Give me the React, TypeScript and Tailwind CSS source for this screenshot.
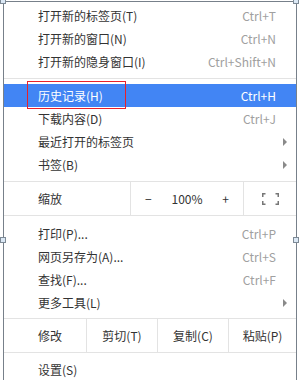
import { ReactNode } from "react";

const font = { fontFamily: '"Noto Sans CJK SC", "Liberation Sans", sans-serif' };

function Item({ label, shortcut, arrow, active }: { label: string; shortcut?: string; arrow?: boolean; active?: boolean }) {
  return (
    <div className={`flex h-[23px] items-center pl-[34px] pr-[20px] ${active ? "bg-[#4285f4] text-white" : "text-[#333]"}`}>
      <span className="flex-1">{label}</span>
      {shortcut && <span className={active ? "text-white" : "text-[#a0a0a0]"}>{shortcut}</span>}
      {arrow && <span className="mr-[-11px] h-0 w-0 border-y-[4px] border-l-[4px] border-y-transparent border-l-[#8a8a8a]" />}
    </div>
  );
}

function Sep() {
  return <div className="my-[5px] h-px bg-[#e3e3e3]" />;
}

function Handle({ className }: { className: string }) {
  return <div className={`absolute h-[6px] w-[6px] border border-[#7d8a96] bg-[#dbe8f5] ${className}`} />;
}

function Cell({ children, className }: { children: ReactNode; className?: string }) {
  return <div className={`flex h-full items-center ${className ?? ""}`}>{children}</div>;
}

export default function App() {
  return (
    <div className="relative h-[380px] w-[299px] overflow-hidden bg-white text-[12px]" style={font}>
      <div className="ml-[3px] mr-[2px] mt-[1px] h-[379px] border-x border-t border-[#77808a] pt-[2px]">
        <Item label="打开新的标签页(T)" shortcut="Ctrl+T" />
        <Item label="打开新的窗口(N)" shortcut="Ctrl+N" />
        <Item label="打开新的隐身窗口(I)" shortcut="Ctrl+Shift+N" />
        <Sep />
        <Item label="历史记录(H)" shortcut="Ctrl+H" active />
        <Item label="下载内容(D)" shortcut="Ctrl+J" />
        <Item label="最近打开的标签页" arrow />
        <Item label="书签(B)" arrow />
        <div className="mt-[5px] flex h-[35px] items-center border-y border-[#e3e3e3] text-[#333]">
          <Cell className="w-[126px] pl-[34px]">缩放</Cell>
          <Cell className="w-[113px] justify-between border-l border-[#e3e3e3] px-[14px]">
            <span>−</span>
            <span>100%</span>
            <span>+</span>
          </Cell>
          <Cell className="flex-1 justify-center border-l border-[#e3e3e3]">
            <svg width="17" height="12" viewBox="0 0 17 12" fill="none" stroke="#777" strokeWidth="1.5">
              <path d="M0.75 4V0.75H3.5M13.5 0.75H16.25V4M16.25 8V11.25H13.5M3.5 11.25H0.75V8" />
            </svg>
          </Cell>
        </div>
        <div className="mt-[6px]" />
        <Item label="打印(P)..." shortcut="Ctrl+P" />
        <Item label="网页另存为(A)..." shortcut="Ctrl+S" />
        <Item label="查找(F)..." shortcut="Ctrl+F" />
        <Item label="更多工具(L)" arrow />
        <div className="mt-[4px] flex h-[35px] border-y border-[#e3e3e3] text-[#333]">
          <Cell className="w-[82px] pl-[34px]">修改</Cell>
          <Cell className="w-[71px] justify-center border-l border-[#e3e3e3]">剪切(T)</Cell>
          <Cell className="w-[71px] justify-center border-l border-[#e3e3e3]">复制(C)</Cell>
          <Cell className="flex-1 justify-center border-l border-[#e3e3e3]">粘贴(P)</Cell>
        </div>
        <div className="mt-[5px]" />
        <Item label="设置(S)" />
      </div>
      <div className="absolute left-[27px] top-[81px] h-[28px] w-[99px] border border-[#e8202a]" />
      <Handle className="left-0 top-[-2px]" />
      <Handle className="right-0 top-[-2px]" />
      <Handle className="left-0 top-[237px]" />
      <Handle className="right-0 top-[237px]" />
    </div>
  );
}
